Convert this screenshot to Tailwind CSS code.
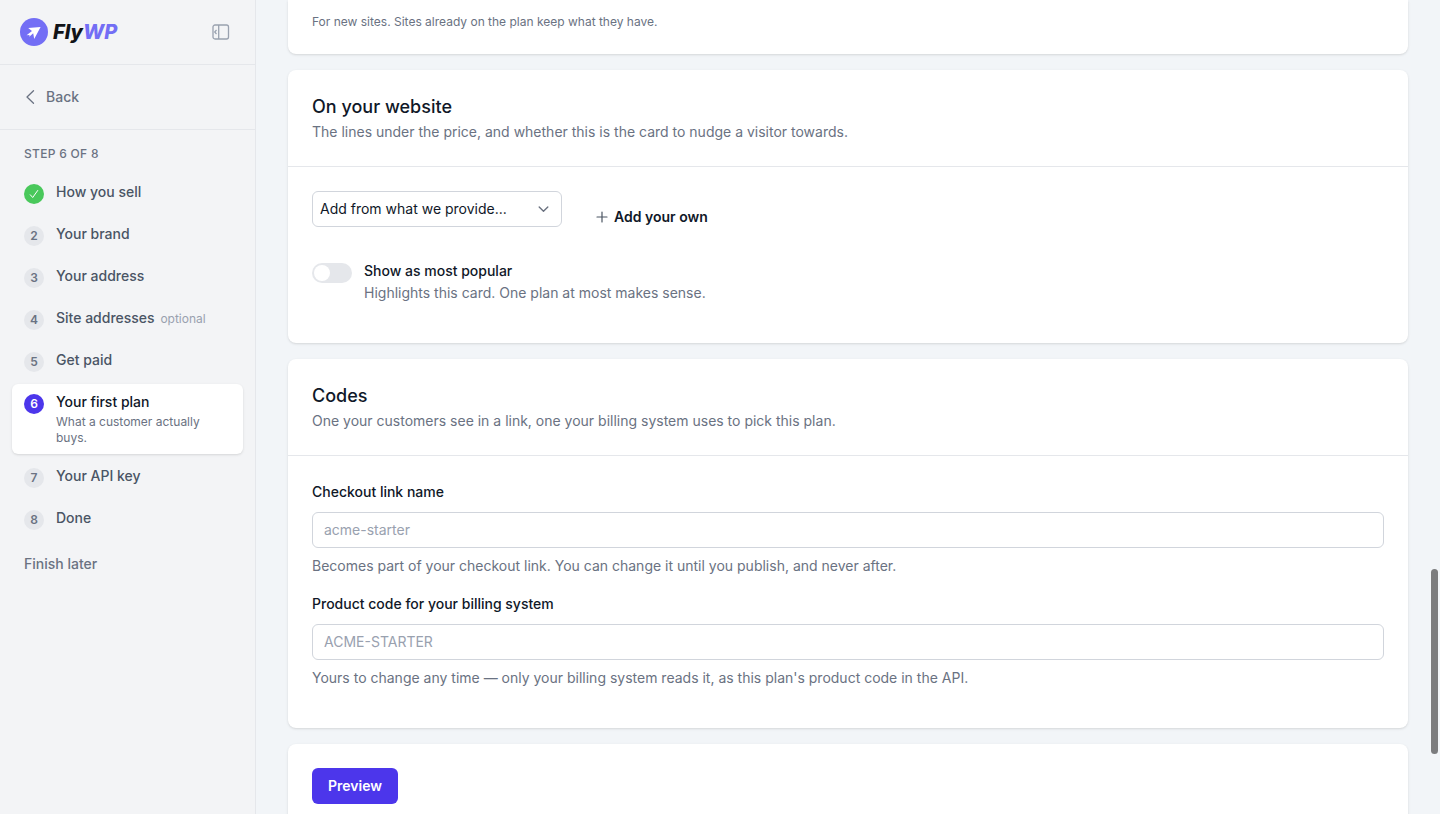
<!DOCTYPE html>
<html lang="en">
<head>
<meta charset="utf-8">
<meta name="viewport" content="width=device-width, initial-scale=1">
<title>FlyWP – Your first plan</title>
<script src="https://cdn.jsdelivr.net/npm/@tailwindcss/browser@4"></script>
</head>
<body class="relative flex h-screen overflow-hidden bg-gray-100 font-['Inter',sans-serif] text-sm text-gray-900">
<aside class="w-64 shrink-0 border-r border-gray-200">
  <div class="flex h-16 items-center justify-between pr-[25px] pl-5">
    <a href="#" class="flex items-center gap-[5px]" aria-label="FlyWP">
      <svg class="size-7" viewBox="0 0 28 28"><circle cx="14" cy="14" r="14" fill="#736ef5"/><path d="M8.2 10 20.6 9 14.2 21 13.2 15.2 9.3 18.7 9.5 16.9 6.6 17.2 12 13 Z" fill="#fff"/></svg>
      <span class="text-xl leading-7 font-extrabold text-[#111318] italic">Fly<span class="text-[#736ef5]">WP</span></span>
    </a>
    <button type="button" aria-label="Collapse sidebar" class="text-gray-400">
      <svg class="h-4 w-[18px]" viewBox="0 0 18 16" fill="none" stroke="currentColor"><rect x="1" y="1" width="15.5" height="14" rx="2" stroke-width="1.3"/><path d="M6.7 1v14" stroke-width="1.3"/><path d="M4.5 6 2.7 8l1.8 2" stroke-width="1.2"/></svg>
    </button>
  </div>
  <div class="flex h-[66px] items-center border-y border-gray-200 px-6">
    <a href="#" class="flex items-center gap-2.5 font-medium text-gray-500">
      <svg class="h-4 w-3" viewBox="0 0 12 16" fill="none" stroke="currentColor" stroke-width="1.3" stroke-linecap="round" stroke-linejoin="round"><path d="M9.5 1.8 3 8l6.5 6.2"/></svg>Back</a>
  </div>
  <nav class="px-3 pt-4" aria-label="Setup steps">
    <p class="px-3 text-xs font-medium tracking-wide text-gray-500">STEP 6 OF 8</p>
    <ol class="mt-3 flex flex-col gap-1 font-medium text-gray-600">
      <li><a href="#" class="flex items-start gap-3 px-3 py-2"><span class="mt-0.5 flex size-5 items-center justify-center rounded-full bg-[#49c85b]"><svg class="size-3" viewBox="0 0 12 12" fill="none" stroke="#fff" stroke-linecap="round" stroke-linejoin="round"><path d="m2.3 6.8 2.4 2.7 5-7"/></svg></span>How you sell</a></li>
      <li><a href="#" class="flex items-start gap-3 px-3 py-2"><span class="mt-0.5 flex size-5 items-center justify-center rounded-full bg-gray-200 text-xs font-semibold text-gray-500">2</span>Your brand</a></li>
      <li><a href="#" class="flex items-start gap-3 px-3 py-2"><span class="mt-0.5 flex size-5 items-center justify-center rounded-full bg-gray-200 text-xs font-semibold text-gray-500">3</span>Your address</a></li>
      <li><a href="#" class="flex items-start gap-3 px-3 py-2"><span class="mt-0.5 flex size-5 items-center justify-center rounded-full bg-gray-200 text-xs font-semibold text-gray-500">4</span><span>Site addresses <span class="ml-0.5 text-xs font-normal text-gray-400">optional</span></span></a></li>
      <li><a href="#" class="flex items-start gap-3 px-3 py-2"><span class="mt-0.5 flex size-5 items-center justify-center rounded-full bg-gray-200 text-xs font-semibold text-gray-500">5</span>Get paid</a></li>
      <li><a href="#" aria-current="step" class="flex items-start gap-3 rounded-md bg-white px-3 py-2 text-gray-900 shadow-sm"><span class="mt-0.5 flex size-5 shrink-0 items-center justify-center rounded-full bg-[#4c36eb] text-xs font-semibold text-white">6</span><span>Your first plan<span class="mt-0.5 block text-xs font-normal text-gray-500">What a customer actually buys.</span></span></a></li>
      <li><a href="#" class="flex items-start gap-3 px-3 py-2"><span class="mt-0.5 flex size-5 items-center justify-center rounded-full bg-gray-200 text-xs font-semibold text-gray-500">7</span>Your API key</a></li>
      <li><a href="#" class="flex items-start gap-3 px-3 py-2"><span class="mt-0.5 flex size-5 items-center justify-center rounded-full bg-gray-200 text-xs font-semibold text-gray-500">8</span>Done</a></li>
    </ol>
    <a href="#" class="mt-4 block px-3 font-medium text-gray-500">Finish later</a>
  </nav>
</aside>
<main class="flex min-w-0 flex-1 flex-col gap-4 overflow-hidden bg-slate-100/50 px-8">
  <section class="shrink-0 rounded-b-lg bg-white px-6 pt-3.5 pb-6 shadow-sm">
    <p class="text-xs text-gray-500">For new sites. Sites already on the plan keep what they have.</p>
  </section>
  <section class="shrink-0 rounded-lg bg-white shadow-sm">
    <header class="border-b border-gray-200 p-6">
      <h2 class="text-lg leading-[26px] font-medium">On your website</h2>
      <p class="mt-0.5 text-gray-500">The lines under the price, and whether this is the card to nudge a visitor towards.</p>
    </header>
    <div class="px-6 pt-6 pb-10">
      <div class="flex items-start gap-[34px]">
        <div class="relative w-[250px]">
          <select aria-label="Add from what we provide" class="h-9 w-full appearance-none rounded-md border border-gray-300 bg-white pr-9 pl-[7px]"><option>Add from what we provide...</option></select>
          <svg class="pointer-events-none absolute top-3 right-3 size-3" viewBox="0 0 12 12" fill="none" stroke="#6b7280" stroke-width="1.4" stroke-linecap="round" stroke-linejoin="round"><path d="M1.2 4 5.5 8.2 9.8 4"/></svg>
        </div>
        <button type="button" class="mt-2 flex h-9 items-center gap-1.5 font-semibold"><svg class="size-3" viewBox="0 0 12 12" stroke="#4b5563" stroke-width="1.2" stroke-linecap="round"><path d="M6 1v10M1 6h10"/></svg>Add your own</button>
      </div>
      <div class="mt-[26px] flex items-start gap-3">
        <input id="popular" type="checkbox" role="switch" aria-describedby="popular-help" class="mt-0.5 h-5 w-10 shrink-0 appearance-none rounded-full bg-gray-200 p-0.5 before:block before:size-4 before:rounded-full before:bg-white checked:bg-indigo-600 checked:before:ml-5">
        <div>
          <label for="popular" class="block font-medium">Show as most popular</label>
          <p id="popular-help" class="mt-0.5 text-gray-500">Highlights this card. One plan at most makes sense.</p>
        </div>
      </div>
    </div>
  </section>
  <section class="shrink-0 rounded-lg bg-white shadow-sm">
    <header class="border-b border-gray-200 p-6">
      <h2 class="text-lg leading-[26px] font-medium">Codes</h2>
      <p class="mt-0.5 text-gray-500">One your customers see in a link, one your billing system uses to pick this plan.</p>
    </header>
    <div class="flex flex-col gap-[18px] px-6 pt-[26px] pb-10">
      <div>
        <label for="link" class="block font-medium">Checkout link name</label>
        <input id="link" type="text" placeholder="acme-starter" class="mt-2.5 block h-9 w-full rounded-md border border-gray-300 bg-white px-[11px] pb-0.5 placeholder:text-gray-400">
        <p class="mt-2 text-gray-500">Becomes part of your checkout link. You can change it until you publish, and never after.</p>
      </div>
      <div>
        <label for="code" class="block font-medium">Product code for your billing system</label>
        <input id="code" type="text" placeholder="ACME-STARTER" class="mt-2.5 block h-9 w-full rounded-md border border-gray-300 bg-white px-[11px] pb-0.5 placeholder:text-gray-400">
        <p class="mt-2 text-gray-500">Yours to change any time — only your billing system reads it, as this plan's product code in the API.</p>
      </div>
    </div>
  </section>
  <section class="shrink-0 rounded-lg bg-white p-6 shadow-sm">
    <button type="button" class="h-9 rounded-md bg-[#4c36eb] px-4 font-semibold text-white">Preview</button>
  </section>
</main>
<div class="absolute right-0.5 bottom-[60px] h-[185px] w-[7px] rounded-full bg-[#7b7c7e]" aria-hidden="true"></div>
</body>
</html>
